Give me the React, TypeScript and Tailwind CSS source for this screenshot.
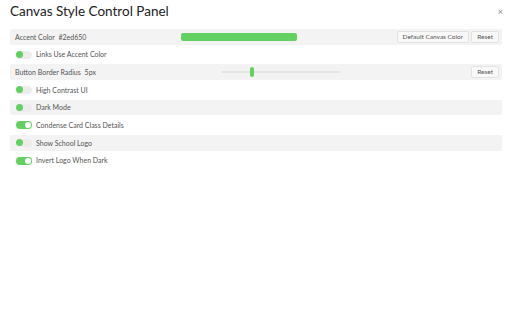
import React from "react";

const green = "bg-[#62d162]";

function Toggle({ on }: { on: boolean }) {
  if (on) {
    return (
      <div className="flex h-[8px] w-[16px] items-center justify-end rounded-full bg-[#62d162] pr-[1px]">
        <div className="h-[6px] w-[6px] rounded-full bg-white" />
      </div>
    );
  }
  return (
    <div className="flex h-[8px] w-[16px] items-center rounded-full bg-[#ececec]">
      <div className={`h-[7px] w-[7px] rounded-full ${green}`} />
    </div>
  );
}

function Btn({ children }: { children: React.ReactNode }) {
  return (
    <button className="h-[12px] rounded-[2px] border border-[#e2e2e2] bg-[#f8f8f8] px-[5px] text-[6.5px] leading-none text-[#555]">
      {children}
    </button>
  );
}

function ToggleRow({ label, on, shaded }: { label: string; on: boolean; shaded: boolean }) {
  return (
    <div className={`flex h-[15.7px] items-center gap-[4px] rounded-[2px] pl-[6px] ${shaded ? "bg-[#f3f3f3]" : ""}`}>
      <Toggle on={on} />
      <span className="text-[7px] text-[#555]">{label}</span>
    </div>
  );
}

export default function App() {
  return (
    <div className="h-[320px] w-[512px] bg-white font-['Lato',sans-serif] text-[#333]">
      <div className="flex items-start justify-between pl-[10px] pr-[9px] pt-[3px]">
        <h1 className="text-[13.5px] leading-[17px] text-[#222]">Canvas Style Control Panel</h1>
        <span className="mt-[4px] text-[9px] leading-none text-[#888]">×</span>
      </div>

      <div className="mx-[10px] mt-[9px] flex w-[492px] flex-col gap-[2px]">
        <div className="flex h-[15.7px] items-center rounded-[2px] bg-[#f3f3f3] pl-[5px] pr-[3px]">
          <span className="w-[166px] text-[7px] text-[#555]">
            Accent Color <span className="ml-[2px]">#2ed650</span>
          </span>
          <div className={`h-[8px] w-[116px] rounded-[2px] ${green}`} />
          <div className="ml-auto flex gap-[2px]">
            <Btn>Default Canvas Color</Btn>
            <Btn>Reset</Btn>
          </div>
        </div>

        <ToggleRow label="Links Use Accent Color" on={false} shaded={false} />

        <div className="flex h-[15.7px] items-center rounded-[2px] bg-[#f3f3f3] pl-[5px] pr-[3px]">
          <span className="w-[206px] text-[7px] text-[#555]">
            Button Border Radius <span className="ml-[2px]">5px</span>
          </span>
          <div className="relative flex h-[10px] w-[119px] items-center">
            <div className="h-[2px] w-full rounded-full bg-[#e4e4e4]" />
            <div className={`absolute left-[29px] top-0 h-[10px] w-[4px] rounded-[2px] ${green}`} />
          </div>
          <div className="ml-auto flex">
            <Btn>Reset</Btn>
          </div>
        </div>

        <ToggleRow label="High Contrast UI" on={false} shaded={false} />
        <ToggleRow label="Dark Mode" on={false} shaded={true} />
        <ToggleRow label="Condense Card Class Details" on={true} shaded={false} />
        <ToggleRow label="Show School Logo" on={false} shaded={true} />
        <ToggleRow label="Invert Logo When Dark" on={true} shaded={false} />
      </div>
    </div>
  );
}
